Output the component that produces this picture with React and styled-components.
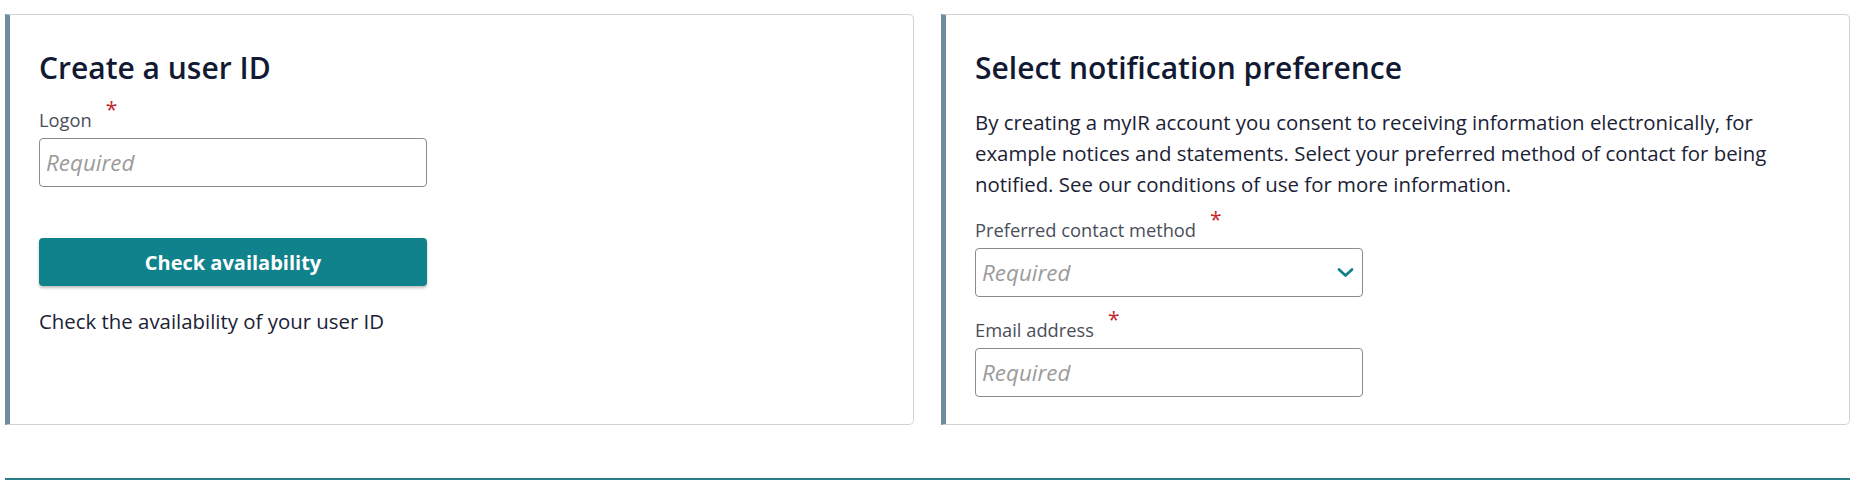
import React from "react";
import styled, { createGlobalStyle } from "styled-components";

const GlobalStyle = createGlobalStyle`
  html, body {
    margin: 0;
    padding: 0;
    background: #fff;
  }
  body {
    font-family: "Open Sans", "Noto Sans", sans-serif;
    color: #1b2235;
  }
  * {
    box-sizing: border-box;
  }
`;

const Chevron = () => (
  <svg width="17" height="11" viewBox="0 0 17 11" aria-hidden="true">
    <path
      d="M2 2.5 L8.5 8.5 L15 2.5"
      fill="none"
      stroke="#0f7f88"
      strokeWidth="2.7"
      strokeLinecap="round"
      strokeLinejoin="round"
    />
  </svg>
);

const Field = ({ label, children, last }) => (
  <FieldWrap $last={last}>
    <Label>
      {label}
      <Star>*</Star>
    </Label>
    {children}
  </FieldWrap>
);

const App = () => {
  return (
    <>
      <GlobalStyle />
      <Page>
        <Cards>
          <Card>
            <Titulo>Create a user ID</Titulo>
            <Field label="Logon">
              <Input type="text" placeholder="Required" />
            </Field>
            <Boton type="button">Check availability</Boton>
            <Ayuda>Check the availability of your user ID</Ayuda>
          </Card>
          <Card>
            <Titulo>Select notification preference</Titulo>
            <Parrafo>
              By creating a myIR account you consent to receiving information
              electronically, for example notices and statements. Select your
              preferred method of contact for being notified. See our
              conditions of use for more information.
            </Parrafo>
            <Field label="Preferred contact method">
              <SelectBox>
                <Placeholder>Required</Placeholder>
                <Chevron />
              </SelectBox>
            </Field>
            <Field label="Email address" last>
              <Input type="email" placeholder="Required" />
            </Field>
          </Card>
        </Cards>
        <Linea />
      </Page>
    </>
  );
};

export default App;

const Page = styled.div`
  padding: 14px 18px 0 5px;
`;
const Cards = styled.div`
  display: grid;
  grid-template-columns: 1fr 1fr;
  gap: 27px;
`;
const Card = styled.section`
  height: 411px;
  border: 1px solid #d2d2d2;
  border-left: 5px solid #6f8ca1;
  border-radius: 0 5px 5px 0;
  padding: 35px 29px 0 29px;
  display: flex;
  flex-direction: column;
  align-items: flex-start;
`;
const Titulo = styled.h2`
  margin: 0 0 21px 0;
  font-size: 30px;
  line-height: 36px;
  font-weight: 600;
  color: #121a33;
`;
const FieldWrap = styled.div`
  display: flex;
  flex-direction: column;
  margin-bottom: ${(p) => (p.$last ? "0" : "20px")};
`;
const Label = styled.label`
  display: flex;
  align-items: flex-start;
  font-size: 18.3px;
  line-height: 26px;
  color: #4a4e59;
  margin-bottom: 5px;
`;
const Star = styled.span`
  color: #c4262e;
  font-size: 21px;
  line-height: 14px;
  margin-left: 14px;
  margin-top: -5px;
`;
const Input = styled.input`
  width: 388px;
  height: 49px;
  border: 1px solid #8a8a8a;
  border-radius: 4px;
  padding: 0 6px;
  font-family: inherit;
  font-size: 22.4px;
  color: #1b2235;
  outline: none;
  &::placeholder {
    color: #9b9b9b;
    font-style: italic;
  }
`;
const SelectBox = styled.div`
  width: 388px;
  height: 49px;
  border: 1px solid #8a8a8a;
  border-radius: 4px;
  padding: 0 8px 0 6px;
  display: flex;
  align-items: center;
  justify-content: space-between;
`;
const Placeholder = styled.span`
  font-size: 22.4px;
  font-style: italic;
  color: #9b9b9b;
`;
const Boton = styled.button`
  width: 388px;
  height: 48px;
  margin-top: 31px;
  border: 0;
  border-radius: 4px;
  background: #10828c;
  color: #fff;
  font-family: inherit;
  font-size: 20px;
  font-weight: 700;
  box-shadow: 0 2px 3px rgba(0, 0, 0, 0.25);
  cursor: pointer;
`;
const Ayuda = styled.p`
  margin: 22px 0 0 0;
  font-size: 20.4px;
  line-height: 26px;
  color: #1b2235;
`;
const Parrafo = styled.p`
  margin: 0 0 17px 0;
  max-width: 830px;
  font-size: 20.4px;
  line-height: 31px;
  color: #1b2235;
`;
const Linea = styled.div`
  margin-top: 53px;
  height: 2px;
  background: #2b7d87;
`;
